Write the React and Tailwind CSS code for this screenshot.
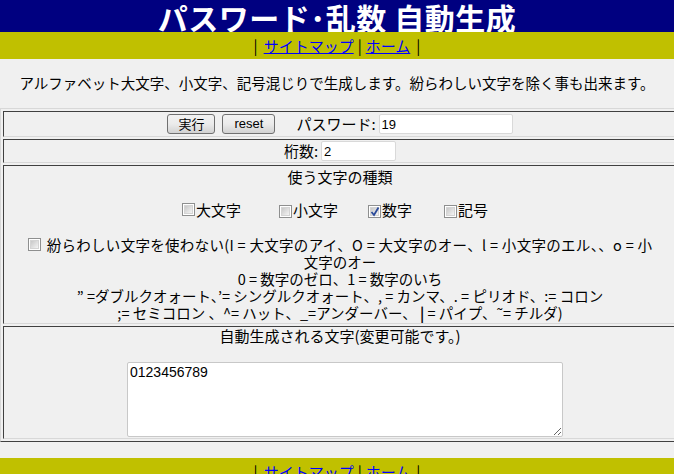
import React from "react";

const jp = { fontFamily: '"Noto Sans CJK JP", "Noto Sans", sans-serif' };

function Cb({ checked }) {
  return (
    <span className="inline-flex w-[13px] h-[13px] border border-[#8e8f8f] bg-white p-[1px] shrink-0">
      <span className="relative flex-1 bg-gradient-to-br from-[#c8c8c8] to-[#f4f4f4] border border-[#d4d4d4]">
        {checked && (
          <svg className="absolute left-[-1px] top-[-2px]" width="10" height="11" viewBox="0 0 10 11">
            <path d="M1.5 6 L4 9 L8.5 1.5" fill="none" stroke="#2b4a9a" strokeWidth="1.8" />
          </svg>
        )}
      </span>
    </span>
  );
}

function Btn({ children, w }) {
  return (
    <button
      className={`h-[20px] ${w} border border-[#707070] rounded-[3px] bg-gradient-to-b from-[#f2f2f2] via-[#ebebeb] to-[#d2d2d2] text-[13px] leading-[18px] text-black flex items-center justify-center`}
      style={jp}
    >
      {children}
    </button>
  );
}

function NavLinks() {
  return (
    <div className="text-[15px] leading-[20px] text-black flex items-center" style={jp}>
      <span>|</span>
      <a className="ml-[6px] text-[#0000ff] underline" href="#">サイトマップ</a>
      <span className="ml-[4px]">|</span>
      <a className="ml-[4px] text-[#0000ff] underline" href="#">ホーム</a>
      <span className="ml-[6px]">|</span>
    </div>
  );
}

function Cell({ className = "", children }) {
  return (
    <div className={`border border-t-[#404040] border-l-[#404040] border-b-[#d8d8d8] border-r-[#d8d8d8] ${className}`}>
      {children}
    </div>
  );
}

export default function App() {
  return (
    <div className="w-[674px] h-[474px] overflow-hidden bg-[#f0f0f0] text-black" style={jp}>
      <div className="h-[32px] bg-[#000080] flex items-center justify-center overflow-hidden">
        <h1 className="text-white font-bold text-[30px] leading-[30px] tracking-[0.5px] pt-[1px]" style={jp}>
          パスワード･乱数 自動生成
        </h1>
      </div>
      <div className="h-[27px] bg-[#c0c000] flex items-center justify-center">
        <NavLinks />
      </div>
      <div className="h-[49px] flex items-center justify-center text-[14.5px] pb-[2px]">
        アルファベット大文字、小文字、記号混じりで生成します。紛らわしい文字を除く事も出来ます。
      </div>

      <div className="w-[680px] border border-t-[#d8d8d8] border-l-[#d8d8d8] border-b-[#404040] border-r-[#404040] p-[2px] flex flex-col gap-[2px] text-[15px]">
        <Cell className="h-[26px] flex items-center justify-center">
          <Btn w="w-[48px]">実行</Btn>
          <span className="ml-[7px]">
            <Btn w="w-[53px]">
              <span style={{ fontFamily: '"Liberation Sans", sans-serif' }}>reset</span>
            </Btn>
          </span>
          <span className="ml-[21px] leading-[20px]">パスワード:</span>
          <input
            className="ml-[3px] w-[134px] h-[20px] bg-white border border-[#d9d9d9] rounded-[2px] px-[2px] text-[13px] outline-none"
            style={{ fontFamily: '"Liberation Sans", sans-serif' }}
            defaultValue="19"
          />
        </Cell>
        <Cell className="h-[24px] flex items-center justify-center">
          <span className="leading-[20px]">桁数:</span>
          <input
            className="ml-[3px] w-[75px] h-[20px] bg-white border border-[#d9d9d9] rounded-[2px] px-[2px] text-[13px] outline-none"
            style={{ fontFamily: '"Liberation Sans", sans-serif' }}
            defaultValue="2"
          />
        </Cell>
        <Cell className="h-[159px] pt-[2px] flex flex-col items-center leading-[17px]">
          <div className="h-[17px]">使う文字の種類</div>
          <div className="mt-[16px] h-[17px] flex items-center pr-[10px]">
            <Cb />
            <span className="ml-[1px]">大文字</span>
            <span className="ml-[38px]"><Cb /></span>
            <span className="ml-[1px]">小文字</span>
            <span className="ml-[30px]"><Cb checked /></span>
            <span className="ml-[1px]">数字</span>
            <span className="ml-[32px]"><Cb /></span>
            <span className="ml-[1px]">記号</span>
          </div>
          <div className="mt-[18px] flex flex-col items-center whitespace-nowrap text-[14.5px] leading-[17px]">
            <div className="h-[17px] flex items-center">
              <Cb />
              <span className="ml-[6px] tracking-[0.3px]">紛らわしい文字を使わない(I = 大文字のアイ、O = 大文字のオー、l = 小文字のエル、、o = 小</span>
            </div>
            <div className="h-[17px]">文字のオー</div>
            <div className="h-[17px]">0 = 数字のゼロ、1 = 数字のいち</div>
            <div className="h-[17px]">” =ダブルクオォート、’= シングルクオォート、, = カンマ、. = ピリオド、:= コロン</div>
            <div className="h-[17px]">;= セミコロン 、^= ハット、_=アンダーバー、 <span className="font-bold">|</span> = パイプ、˜= チルダ)</div>
          </div>
        </Cell>
        <Cell className="h-[113px] flex flex-col items-center">
          <div className="h-[18px] leading-[18px]">自動生成される文字(変更可能です。)</div>
          <textarea
            className="mt-[17px] ml-[10px] w-[436px] h-[75px] bg-white border border-[#c8c8c8] rounded-[2px] px-[2px] py-[1px] text-[14px] leading-[16px] resize-y outline-none"
            style={{ fontFamily: '"Liberation Sans", sans-serif' }}
            defaultValue="0123456789"
          />
        </Cell>
      </div>

      <div className="h-[16px]" />
      <div className="h-[27px] bg-[#c0c000] flex items-center justify-center">
        <NavLinks />
      </div>
    </div>
  );
}
